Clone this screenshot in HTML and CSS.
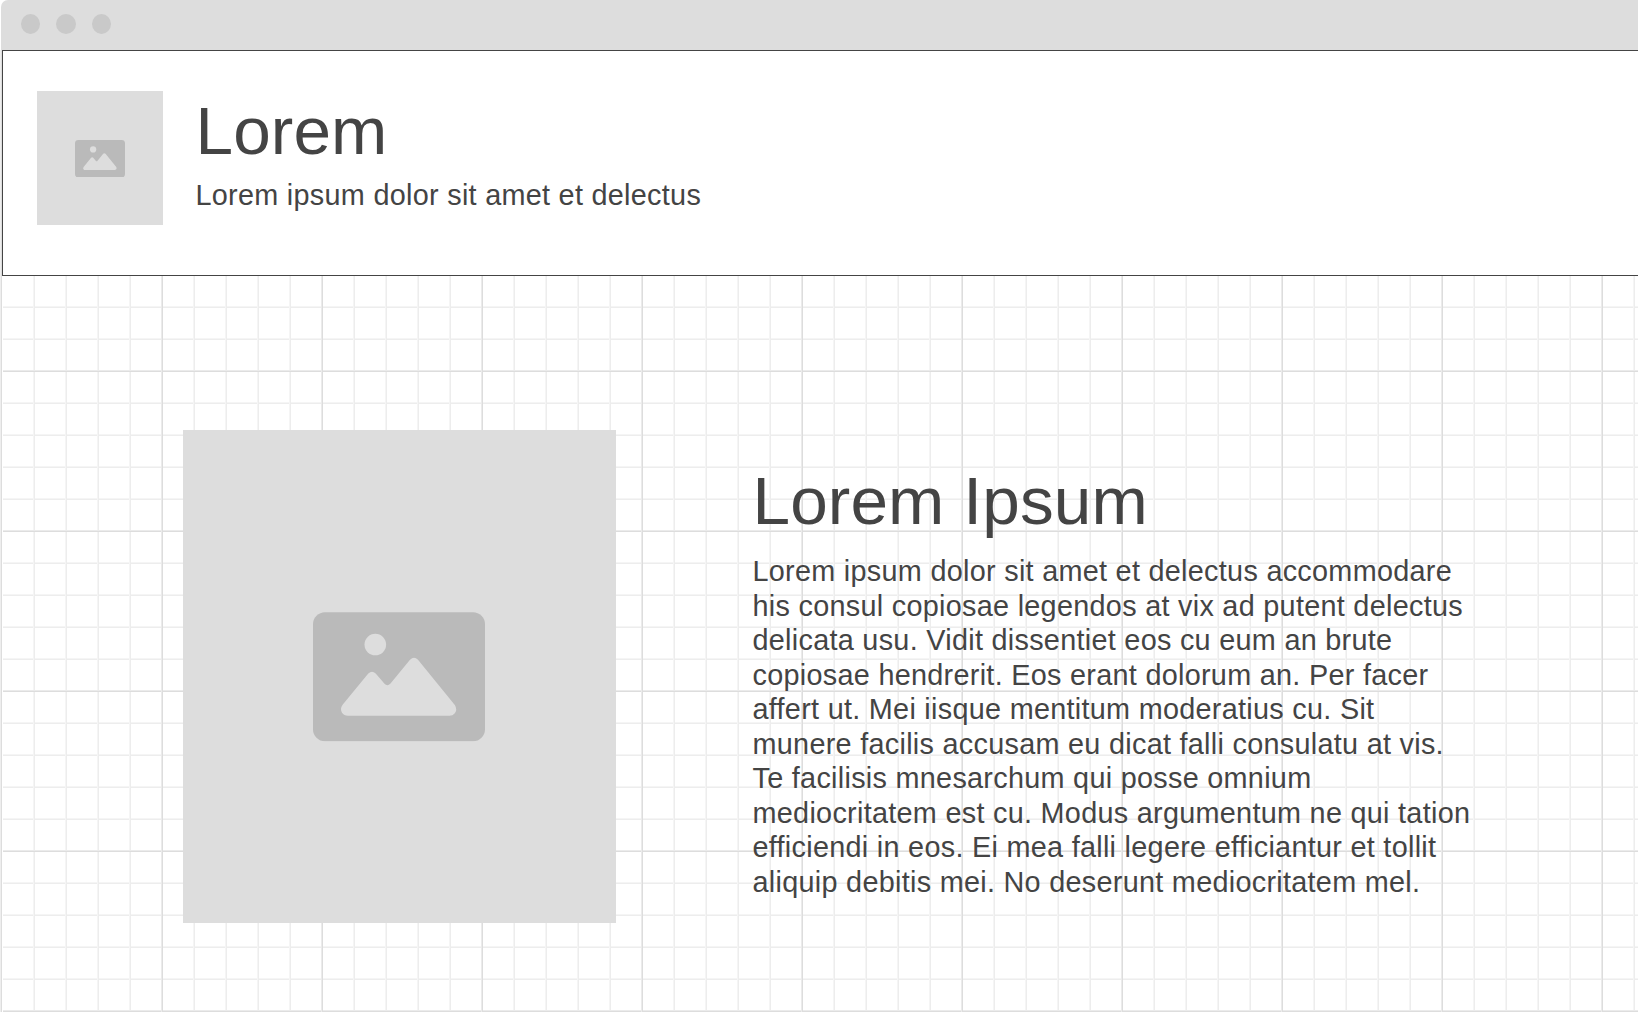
FILE: index.html
```
<!DOCTYPE html>
<html lang="la">
<head>
<meta charset="utf-8">
<title>Lorem</title>
<link rel="stylesheet" href="styles.css">
</head>
<body>
<svg class="symbols" aria-hidden="true">
  <symbol id="picture" viewBox="0 0 172 129">
    <rect width="172" height="129" rx="12" fill="#bababa"/>
    <circle cx="62.3" cy="32.3" r="10.8" fill="#ddd"/>
    <path fill="#ddd" d="M29.6 92.5 55.3 61.3Q59 57.5 62.7 61.3L71.3 71.3Q74.3 74.8 77.5 71.3L97 47.4Q101 43.6 105 47.4L142 93Q144.5 97.5 141.8 101Q139.8 103.5 136.5 103.5H35Q31 103.5 29 100.5Q26.8 96.5 29.6 92.5Z"/>
  </symbol>
</svg>
<div class="window">
  <div class="titlebar"><span class="dot"></span><span class="dot"></span><span class="dot"></span></div>
  <header class="header">
    <div class="image image-small"><svg class="icon"><use href="#picture"/></svg></div>
    <div class="brand">
      <h1 class="title">Lorem</h1>
      <p class="text">Lorem ipsum dolor sit amet et delectus</p>
    </div>
  </header>
  <main class="content">
    <div class="image image-large"><svg class="icon"><use href="#picture"/></svg></div>
    <article class="article">
      <h2 class="title">Lorem Ipsum</h2>
      <p class="text">Lorem ipsum dolor sit amet et delectus accommodare<br>his consul copiosae legendos at vix ad putent delectus<br>delicata usu. Vidit dissentiet eos cu eum an brute<br>copiosae hendrerit. Eos erant dolorum an. Per facer<br>affert ut. Mei iisque mentitum moderatius cu. Sit<br>munere facilis accusam eu dicat falli consulatu at vis.<br>Te facilisis mnesarchum qui posse omnium<br>mediocritatem est cu. Modus argumentum ne qui tation<br>efficiendi in eos. Ei mea falli legere efficiantur et tollit<br>aliquip debitis mei. No deserunt mediocritatem mel.</p>
    </article>
  </main>
</div>
</body>
</html>
```
FILE: styles.css
```
* { box-sizing: border-box; }
body {
  margin: 0;
  background: #fff;
  color: #444;
  font-family: "Liberation Sans", Arial, sans-serif;
  overflow: hidden;
}
.symbols { display: none; }
.window {
  display: flex;
  flex-direction: column;
  height: 1012px;
  padding-left: 1px;
}
.titlebar {
  flex: none;
  display: flex;
  align-items: center;
  gap: 16px;
  height: 50px;
  padding: 0 0 2px 20px;
  background: #ddd;
  border-top-left-radius: 7px;
}
.dot {
  width: 19px;
  height: 20px;
  border-radius: 50%;
  background: #c9c9c9;
}
.dot:nth-child(2) { width: 20px; }
.header {
  flex: none;
  display: flex;
  height: 226px;
  margin-left: 1px;
  padding: 40px 0 0 34px;
  border: 1px solid #444;
  border-right: 0;
  box-shadow: -1px 0 #ddd, -2px 0 #eee;
}
.image {
  flex: none;
  display: flex;
  justify-content: center;
  background: #ddd;
}
.image-small { width: 126px; height: 134px; padding-top: 48.5px; }
.image-small .icon { width: 50px; height: 37.5px; }
.image-large { width: 433px; height: 493px; padding: 182px 1px 0 0; }
.image-large .icon { width: 172px; height: 129.5px; }
.icon { display: block; }
.brand { padding: 1px 0 0 32.5px; }
.title {
  margin: 0;
  font-size: 67.5px;
  font-weight: 400;
  line-height: 78px;
  letter-spacing: 0.13px;
  white-space: nowrap;
}
.text {
  margin: 14px 0 0;
  font-size: 28.8px;
  line-height: 34.5px;
  letter-spacing: 0.29px;
  white-space: nowrap;
}
.brand .text { margin-top: 8px; }
.content {
  flex: 1;
  display: flex;
  align-items: flex-start;
  margin-left: -1px;
  padding: 154px 0 0 183px;
  background-image:
    linear-gradient(90deg, #eee 1px, #ddd 1px, #ddd 2px, #fff 2px, #fff 3px, transparent 3px),
    linear-gradient(90deg, #ebebeb 1px, #ddd 1px, #ddd 2px, transparent 2px),
    linear-gradient(#ebebeb 1px, #ddd 1px, #ddd 2px, transparent 2px),
    linear-gradient(90deg, #f5f5f5 1px, #ededed 1px, #ededed 2px, transparent 2px),
    linear-gradient(#f5f5f5 1px, #ededed 1px, #ededed 2px, transparent 2px);
  background-size: 100% 100%, 160px 160px, 160px 160px, 32px 32px, 32px 32px;
  background-position: 0 0, 161px 0, 0 94px, 33px 0, 0 30px;
  background-repeat: no-repeat, repeat, repeat, repeat, repeat;
}
.article { padding: 32px 0 0 136.5px; }
```
